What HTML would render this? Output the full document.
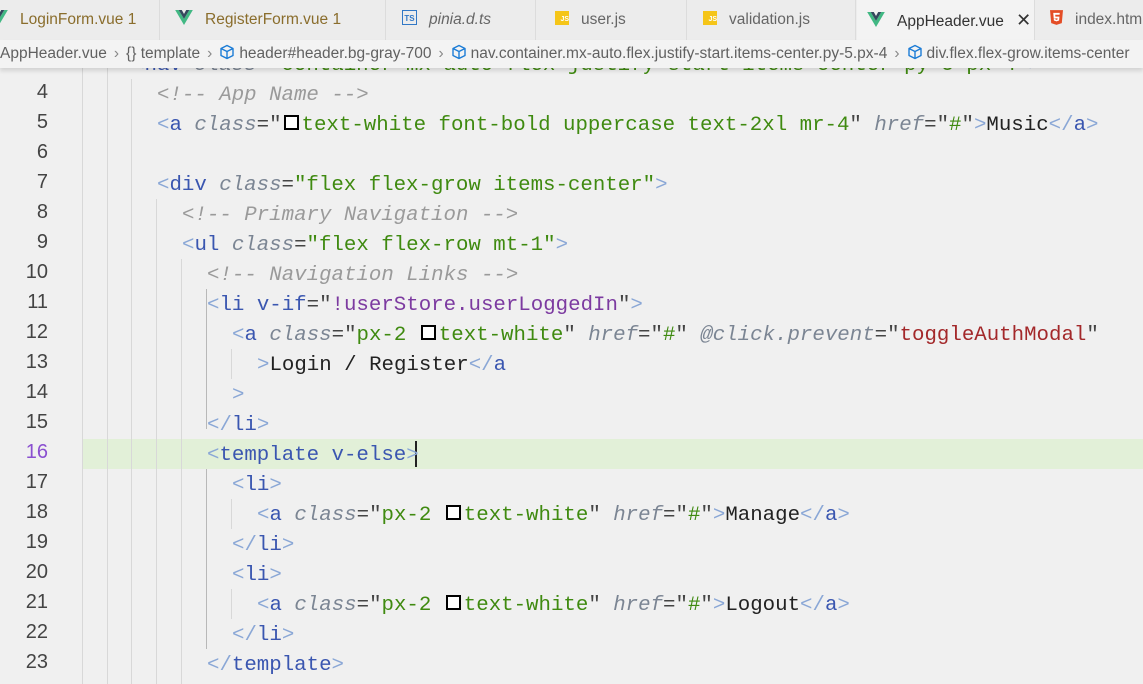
<!DOCTYPE html>
<html><head><meta charset="utf-8"><style>
body{margin:0;width:1143px;height:684px;overflow:hidden;background:#f0f0f0;font-family:"Liberation Sans",sans-serif;position:relative}
.tabs{position:absolute;top:0;left:0;width:1143px;height:40px;background:#ececec}
.tab{position:absolute;top:0;height:40px;border-right:1px solid #dcdcdc;font-size:15.5px;line-height:40px;color:#666;white-space:nowrap;overflow:hidden;box-sizing:border-box}
.tab.act{background:#f3f3f3;color:#333}
.tab svg{vertical-align:middle;position:relative;top:-2px;margin-right:12px}
.js{display:inline-block;width:14px;height:14px;background:#f5c518;color:#fff;font-size:7px;line-height:18px;text-align:right;vertical-align:middle;margin-right:12px;font-weight:bold;position:relative;top:-2px}
.ts{display:inline-block;width:13px;height:13px;border:1.5px solid #3178c6;color:#3178c6;font-size:8px;line-height:15px;text-align:center;vertical-align:middle;margin-right:12px;font-weight:bold;position:relative;top:-2px}
.crumb{position:absolute;top:40px;left:0;width:1143px;height:28px;background:#f3f3f3;box-shadow:0 3px 4px rgba(0,0,0,.12);font-size:15.5px;line-height:28px;color:#616161;white-space:nowrap;z-index:3;overflow:hidden}
.crumb svg{vertical-align:middle;position:relative;top:-2px;margin-right:4px}
.sep{color:#888;margin:0 7px}
.code{position:absolute;left:0;top:51px;width:1143px;font-family:"Liberation Mono",monospace;font-size:20.75px}
.ln{position:absolute;left:0;width:48px;text-align:right;color:#444;font-family:"Liberation Sans",sans-serif;font-size:20px}
.l{position:absolute;height:30px;line-height:30px;white-space:pre;color:#222}
.g{position:absolute;width:1px;background:#d8d8d8}
.p{color:#8aa7d6}.t{color:#3a56b0}.a{color:#7b8593;font-style:italic}.s{color:#3f8a10}.c{color:#9a9a9a;font-style:italic}.q{color:#444}.v{color:#7c3aa0}.r{color:#a3282a}
.sq{display:inline-block;border:2px solid #000;background:#fff;vertical-align:middle;margin:0 3px 0 2px;position:relative;top:-2px;box-sizing:border-box;width:15px;height:15px}
</style></head><body>
<svg width="0" height="0" style="position:absolute"><defs>
<symbol id="vue" viewBox="0 0 20 17"><path d="M0 0h4l6 10 6-10h4L10 17z" fill="#41b883"/><path d="M4 0h3.5L10 4.5 12.5 0H16l-6 10z" fill="#35495e"/></symbol>
<symbol id="cube" viewBox="0 0 16 16"><path d="M8 1.5l6 3v7l-6 3-6-3v-7z M2 4.5l6 3 6-3 M8 7.5v7" fill="none" stroke="#1c7cd6" stroke-width="1.4" stroke-linejoin="round"/></symbol>
<symbol id="h5" viewBox="0 0 14 16"><path d="M0 0h14l-1.3 14L7 16 1.3 14z" fill="#e44d26"/><path d="M3.5 3h7l-.2 2H5.6l.2 2h4.4l-.4 4.2L7 12.2l-2.8-1-.2-2h1.8l.1 1L7 10.6l1.1-.4.1-1.3H4z" fill="#fff"/></symbol>
</defs></svg>
<div class="tabs">
<div class="tab" style="left:-10px;width:170px;color:#8a6d2c;padding-left:0"><svg width="18" height="15"><use href="#vue"/></svg>LoginForm.vue <span>1</span></div>
<div class="tab" style="left:161px;width:225px;color:#8a6d2c;padding-left:14px"><svg width="18" height="15"><use href="#vue"/></svg>RegisterForm.vue <span>1</span></div>
<div class="tab" style="left:387px;width:149px;padding-left:15px"><span class="ts">TS</span><i>pinia.d.ts</i></div>
<div class="tab" style="left:537px;width:150px;padding-left:18px"><span class="js">JS</span>user.js</div>
<div class="tab" style="left:688px;width:168px;padding-left:15px"><span class="js">JS</span>validation.js</div>
<div class="tab act" style="left:857px;width:178px;padding-left:10px"><svg width="18" height="15"><use href="#vue"/></svg>AppHeader.vue <span style="margin-left:8px;font-size:18px">✕</span></div>
<div class="tab" style="left:1036px;width:120px;padding-left:14px"><svg width="13" height="15" style="margin-right:12px"><use href="#h5"/></svg>index.html</div>
</div>
<div class="crumb">AppHeader.vue<span class="sep">›</span>{} template<span class="sep">›</span><svg width="16" height="16"><use href="#cube"/></svg>header#header.bg-gray-700<span class="sep">›</span><svg width="16" height="16"><use href="#cube"/></svg>nav.container.mx-auto.flex.justify-start.items-center.py-5.px-4<span class="sep">›</span><svg width="16" height="16"><use href="#cube"/></svg>div.flex.flex-grow.items-center</div>

<div style="position:absolute;left:82px;top:439px;width:1061px;height:30px;background:#e2f0d8"></div>
<div class="g" style="left:82px;top:68px;height:616px"></div>
<div class="g" style="left:107px;top:68px;height:616px"></div>
<div class="g" style="left:131px;top:79px;height:605px"></div>
<div class="g" style="left:156px;top:199px;height:485px"></div>
<div class="g" style="left:181px;top:259px;height:425px"></div>
<div class="g" style="left:206px;top:289px;height:140px;background:#b8b8b8"></div>
<div class="g" style="left:231px;top:349px;height:30px"></div>
<div class="g" style="left:206px;top:469px;height:180px;background:#b8b8b8"></div>
<div class="g" style="left:231px;top:499px;height:30px"></div>
<div class="g" style="left:231px;top:589px;height:30px"></div>
<div style="position:absolute;left:415px;top:441px;width:2px;height:26px;background:#222"></div>

<div class="code">
<div class="ln" style="top:0">3</div>
<div class="ln" style="top:30px">4</div><div class="ln" style="top:60px">5</div><div class="ln" style="top:90px">6</div><div class="ln" style="top:120px">7</div><div class="ln" style="top:150px">8</div><div class="ln" style="top:180px">9</div><div class="ln" style="top:210px">10</div><div class="ln" style="top:240px">11</div><div class="ln" style="top:270px">12</div><div class="ln" style="top:300px">13</div><div class="ln" style="top:330px">14</div><div class="ln" style="top:360px">15</div><div class="ln" style="top:390px;color:#8a4fd0">16</div><div class="ln" style="top:420px">17</div><div class="ln" style="top:450px">18</div><div class="ln" style="top:480px">19</div><div class="ln" style="top:510px">20</div><div class="ln" style="top:540px">21</div><div class="ln" style="top:570px">22</div><div class="ln" style="top:600px">23</div>

<div class="l" style="top:0;left:132px"><span class="p">&lt;</span><span class="t">nav</span> <span class="a">class</span><span class="q">=</span><span class="s">"container mx-auto flex justify-start items-center py-5 px-4"</span><span class="p">&gt;</span></div>
<div class="l" style="top:30px;left:157px"><span class="c">&lt;!-- App Name --&gt;</span></div>
<div class="l" style="top:60px;left:157px"><span class="p">&lt;</span><span class="t">a</span> <span class="a">class</span><span class="q">="</span><span class="sq"></span><span class="s">text-white font-bold uppercase text-2xl mr-4</span><span class="q">"</span> <span class="a">href</span><span class="q">="</span><span class="s">#</span><span class="q">"</span><span class="p">&gt;</span>Music<span class="p">&lt;/</span><span class="t">a</span><span class="p">&gt;</span></div>
<div class="l" style="top:120px;left:157px"><span class="p">&lt;</span><span class="t">div</span> <span class="a">class</span><span class="q">=</span><span class="s">"flex flex-grow items-center"</span><span class="p">&gt;</span></div>
<div class="l" style="top:150px;left:182px"><span class="c">&lt;!-- Primary Navigation --&gt;</span></div>
<div class="l" style="top:180px;left:182px"><span class="p">&lt;</span><span class="t">ul</span> <span class="a">class</span><span class="q">=</span><span class="s">"flex flex-row mt-1"</span><span class="p">&gt;</span></div>
<div class="l" style="top:210px;left:207px"><span class="c">&lt;!-- Navigation Links --&gt;</span></div>
<div class="l" style="top:240px;left:207px"><span class="p">&lt;</span><span class="t">li</span> <span class="t">v-if</span><span class="q">="</span><span class="v">!userStore.userLoggedIn</span><span class="q">"</span><span class="p">&gt;</span></div>
<div class="l" style="top:270px;left:232px"><span class="p">&lt;</span><span class="t">a</span> <span class="a">class</span><span class="q">="</span><span class="s">px-2 </span><span class="sq"></span><span class="s">text-white</span><span class="q">"</span> <span class="a">href</span><span class="q">="</span><span class="s">#</span><span class="q">"</span> <span class="a">@click.prevent</span><span class="q">="</span><span class="r">toggleAuthModal</span><span class="q">"</span></div>
<div class="l" style="top:300px;left:257px"><span class="p">&gt;</span>Login / Register<span class="p">&lt;/</span><span class="t">a</span></div>
<div class="l" style="top:330px;left:232px"><span class="p">&gt;</span></div>
<div class="l" style="top:360px;left:207px"><span class="p">&lt;/</span><span class="t">li</span><span class="p">&gt;</span></div>
<div class="l" style="top:390px;left:207px"><span class="p">&lt;</span><span class="t">template</span> <span class="t">v-else</span><span class="p">&gt;</span></div>
<div class="l" style="top:420px;left:232px"><span class="p">&lt;</span><span class="t">li</span><span class="p">&gt;</span></div>
<div class="l" style="top:450px;left:257px"><span class="p">&lt;</span><span class="t">a</span> <span class="a">class</span><span class="q">="</span><span class="s">px-2 </span><span class="sq"></span><span class="s">text-white</span><span class="q">"</span> <span class="a">href</span><span class="q">="</span><span class="s">#</span><span class="q">"</span><span class="p">&gt;</span>Manage<span class="p">&lt;/</span><span class="t">a</span><span class="p">&gt;</span></div>
<div class="l" style="top:480px;left:232px"><span class="p">&lt;/</span><span class="t">li</span><span class="p">&gt;</span></div>
<div class="l" style="top:510px;left:232px"><span class="p">&lt;</span><span class="t">li</span><span class="p">&gt;</span></div>
<div class="l" style="top:540px;left:257px"><span class="p">&lt;</span><span class="t">a</span> <span class="a">class</span><span class="q">="</span><span class="s">px-2 </span><span class="sq"></span><span class="s">text-white</span><span class="q">"</span> <span class="a">href</span><span class="q">="</span><span class="s">#</span><span class="q">"</span><span class="p">&gt;</span>Logout<span class="p">&lt;/</span><span class="t">a</span><span class="p">&gt;</span></div>
<div class="l" style="top:570px;left:232px"><span class="p">&lt;/</span><span class="t">li</span><span class="p">&gt;</span></div>
<div class="l" style="top:600px;left:207px"><span class="p">&lt;/</span><span class="t">template</span><span class="p">&gt;</span></div>
</div>
</body></html>
